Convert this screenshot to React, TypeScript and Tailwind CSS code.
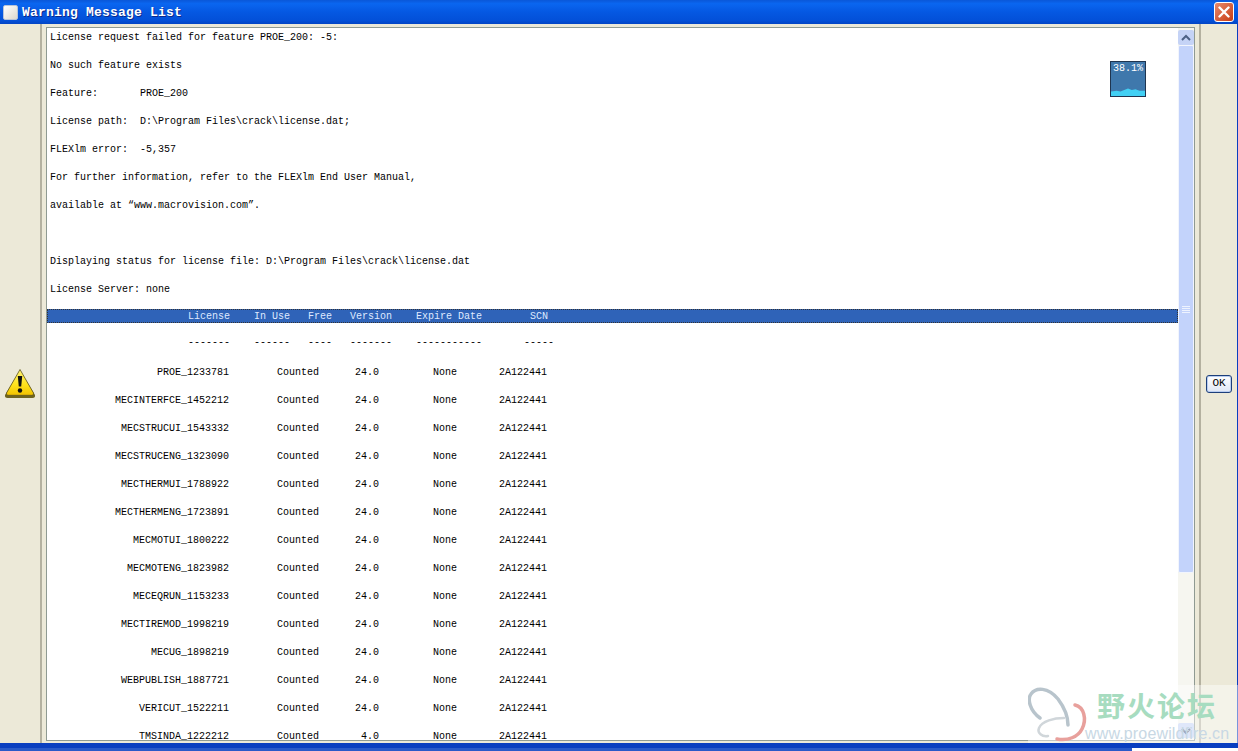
import React from "react";

const top = [
  "License request failed for feature PROE_200: -5:",
  "No such feature exists",
  "Feature:       PROE_200",
  "License path:  D:\\Program Files\\crack\\license.dat;",
  "FLEXlm error:  -5,357",
  "For further information, refer to the FLEXlm End User Manual,",
  "available at “www.macrovision.com”.",
  " ",
  "Displaying status for license file: D:\\Program Files\\crack\\license.dat",
  "License Server: none",
];

const data: [string, string][] = [
  ["PROE_1233781", "24.0"],
  ["MECINTERFCE_1452212", "24.0"],
  ["MECSTRUCUI_1543332", "24.0"],
  ["MECSTRUCENG_1323090", "24.0"],
  ["MECTHERMUI_1788922", "24.0"],
  ["MECTHERMENG_1723891", "24.0"],
  ["MECMOTUI_1800222", "24.0"],
  ["MECMOTENG_1823982", "24.0"],
  ["MECEQRUN_1153233", "24.0"],
  ["MECTIREMOD_1998219", "24.0"],
  ["MECUG_1898219", "24.0"],
  ["WEBPUBLISH_1887721", "24.0"],
  ["VERICUT_1522211", "24.0"],
  ["TMSINDA_1222212", " 4.0"],
];

const row = (name: string, ver: string) =>
  name.padStart(30, " ") + "        Counted" + "      " + ver.padStart(4, " ") + "         None       2A122441";

export default function App() {
  return (
    <div className="relative flex h-[751px] w-[1238px] flex-col overflow-hidden bg-[#ece9d8] font-['Liberation_Mono',monospace]">
      <div className="flex h-6 shrink-0 items-center justify-between bg-[linear-gradient(180deg,#0a57d8_0%,#0a66f0_15%,#0558e2_50%,#0350d8_85%,#0345c4_100%)] pl-[3px] pr-1">
        <div className="flex items-center">
          <div className="h-[15px] w-[15px] rounded-[2px] border border-[#b8c4d8] bg-[linear-gradient(135deg,#ffffff,#ddd8cc)]" />
          <span className="ml-1 text-[13px] font-bold leading-none tracking-[0.2px] text-white [text-shadow:1px_1px_0_#0a2a8c]">
            Warning Message List
          </span>
        </div>
        <div className="flex h-5 w-5 items-center justify-center rounded-[3px] border border-white bg-[linear-gradient(135deg,#e88a6c,#c83c14)]">
          <svg viewBox="0 0 12 12" className="h-3 w-3" stroke="white" strokeWidth="2.4" strokeLinecap="round">
            <path d="M1.5 1.5l9 9M10.5 1.5l-9 9" />
          </svg>
        </div>
      </div>

      <div className="flex min-h-0 flex-1">
        <div className="flex w-[42px] shrink-0 items-center justify-center border-r-2 border-[#b4b1a0] pb-[0px]">
          <svg viewBox="0 0 32 30" className="h-[31px] w-[32px]">
            <defs>
              <linearGradient id="warn" x1="0" y1="0" x2="0" y2="1">
                <stop offset="0" stopColor="#fff27a" />
                <stop offset="0.6" stopColor="#ffe21a" />
                <stop offset="1" stopColor="#f2c200" />
              </linearGradient>
            </defs>
            <path d="M16 2 L31 26.5 Q31.5 29.5 28.5 29.5 L3.5 29.5 Q0.5 29.5 1 26.5 Z" fill="#6e6420" />
            <path d="M16 1 L29.5 24.5 Q30 26.8 28 26.8 L4 26.8 Q2 26.8 2.5 24.5 Z" fill="url(#warn)" stroke="#5e5620" strokeWidth="0.8" />
            <path d="M13.8 7.5 h4.4 l-1 10.5 h-2.4 z" fill="#111" />
            <circle cx="16" cy="22" r="2.2" fill="#111" />
          </svg>
        </div>

        <div className="ml-[4px] mt-[3px] flex h-[714px] w-[1149px] shrink-0 border border-[#8f9a92] bg-white">
          <div className="min-w-0 flex-1 overflow-hidden whitespace-pre pt-[2px] text-[10px] leading-4 text-black">
            {top.map((t, i) => (
              <div key={i} className="mb-3 h-4 pl-[3px]">
                {t}
              </div>
            ))}
            <div className="-mt-px flex h-[14px] items-center border border-dotted border-[#333] bg-[#2f63b8] pl-[2px] pt-[1px] text-[#dfe9ff]">
              {"                       License    In Use   Free   Version    Expire Date        SCN"}
            </div>
            <div className="mt-[12px] h-4 pl-[3px]">
              {"                       -------    ------   ----   -------    -----------       -----"}
            </div>
            <div className="mt-[14px]">
              {data.map(([n, v]) => (
                <div key={n} className="mb-3 h-4 pl-[2px]">
                  {row(n, v)}
                </div>
              ))}
            </div>
          </div>

          <div className="flex w-[16px] shrink-0 flex-col bg-[#f6f6f0]">
            <div className="mt-[2px] flex h-[15px] items-center justify-center rounded-[2px] bg-[#c5d3f6]">
              <svg viewBox="0 0 10 8" className="h-2 w-[10px]" fill="none" stroke="#4d6185" strokeWidth="2">
                <path d="M1 6l4-4 4 4" />
              </svg>
            </div>
            <div className="flex h-[528px] items-center justify-center rounded-[2px] border border-[#f2f5fd] bg-[#c3d3fb]">
              <div className="flex w-2 flex-col gap-[1px]">
                <div className="h-px bg-[#eef3fe]" />
                <div className="h-px bg-[#eef3fe]" />
                <div className="h-px bg-[#eef3fe]" />
                <div className="h-px bg-[#eef3fe]" />
              </div>
            </div>
            <div className="flex-1" />
            <div className="mb-[2px] flex h-[15px] items-center justify-center rounded-[2px] bg-[#c5d3f6]">
              <svg viewBox="0 0 10 8" className="h-2 w-[10px]" fill="none" stroke="#4d6185" strokeWidth="2">
                <path d="M1 2l4 4 4-4" />
              </svg>
            </div>
          </div>
        </div>

        <div className="ml-[4px] flex flex-1 items-center justify-center border-l-2 border-r border-l-[#b4b1a0] border-r-[#0a3fc0]">
          <div className="flex h-[18px] w-[26px] items-center justify-center rounded-[3px] border border-[#1d3f7a] bg-[linear-gradient(180deg,#ffffff,#dfe6f5)] text-[11px] text-black shadow-[inset_0_0_0_1px_#b9cdf0]">
            OK
          </div>
        </div>
      </div>

      <div className="flex h-2 shrink-0 flex-col">
        <div className="h-[5px] bg-[#0a3fc0]" />
        <div className="flex flex-1">
          <div className="w-[1132px] bg-[#2a5ac8]" />
          <div className="flex-1 bg-white" />
        </div>
      </div>

      <div className="absolute left-[1110px] top-[61px] h-9 w-9 border border-[#1f3550] bg-[#3f78ac] pt-[1px] text-center text-[10px] leading-[12px] text-white">
        38.1%
        <svg viewBox="0 0 36 12" preserveAspectRatio="none" className="absolute bottom-0 left-0 h-[9px] w-full">
          <path d="M0 6 L6 5 L10 6 L14 4 L18 2 L22 4 L26 3 L30 5 L36 5 V12 H0 Z" fill="#42d0f4" />
        </svg>
      </div>

      <div className="absolute left-[1028px] top-[685px] h-[58px] w-[210px] bg-white/45">
        <svg viewBox="0 0 60 58" className="absolute left-0 top-0 h-[58px] w-[60px]" fill="none" strokeLinecap="round">
          <path d="M12 33 C2 26 -1 14 3 9 C8 2 20 2 30 14 C36 22 40 30 40 40" stroke="#b8c4cc" strokeWidth="3.5" />
          <path d="M47 20 C56 22 59 34 54 44 C50 52 40 56 29 54" stroke="#e8a09c" strokeWidth="3.5" />
          <path d="M36 33 C26 33 14 36 11 43 C9 48 14 52 20 51" stroke="#d0d6da" strokeWidth="2.5" />
        </svg>
        <div className="absolute left-[69px] top-[2px] font-['Noto_Sans_CJK_SC',sans-serif] text-[28px] font-bold leading-9 tracking-[2px] text-[#a7dcc0]">
          野火论坛
        </div>
        <div className="absolute left-[57px] top-[39px] font-['Liberation_Sans',sans-serif] text-[16px] leading-5 tracking-[0.15px] text-[#c8d8e4]">
          www.proewildfire.cn
        </div>
      </div>
    </div>
  );
}
